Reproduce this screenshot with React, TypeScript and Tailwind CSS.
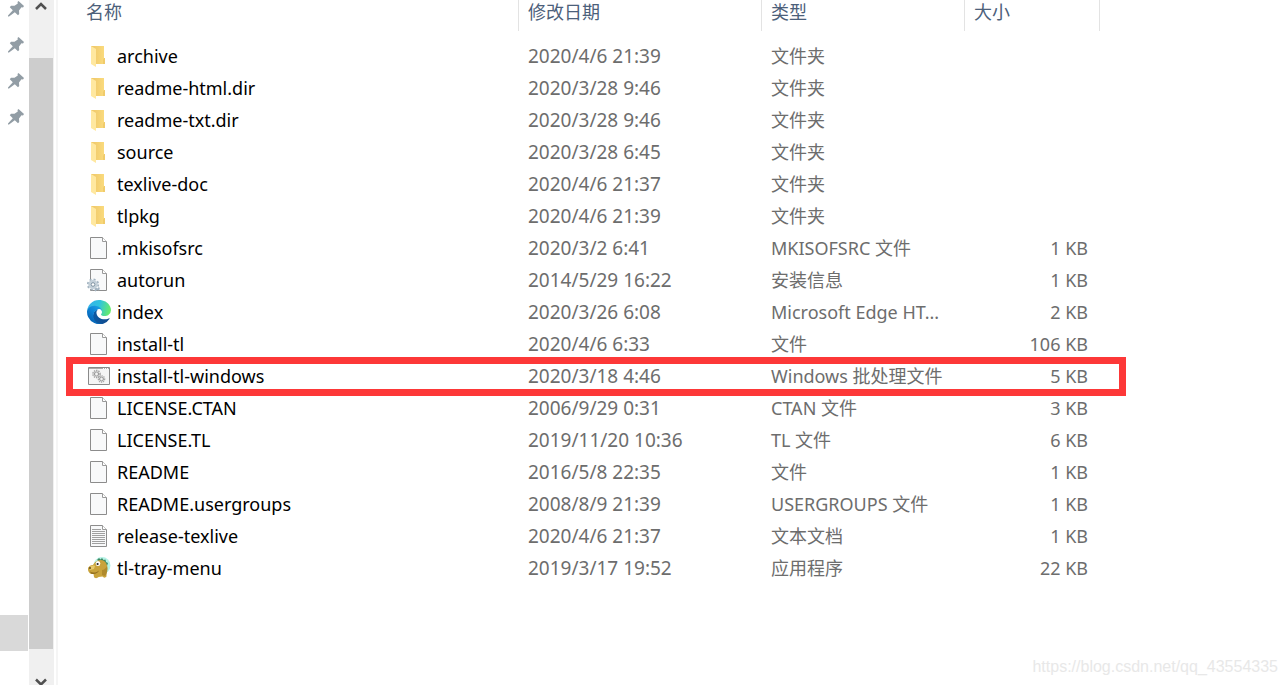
import React from 'react';

type IconKind = 'folder' | 'page' | 'setup' | 'edge' | 'batch' | 'text' | 'tray';

interface FileEntry {
  name: string;
  modified: string;
  type: string;
  size?: string;
  icon: IconKind;
  highlighted?: boolean;
}

const files: FileEntry[] = [
  { name: 'archive', modified: '2020/4/6 21:39', type: '文件夹', icon: 'folder' },
  { name: 'readme-html.dir', modified: '2020/3/28 9:46', type: '文件夹', icon: 'folder' },
  { name: 'readme-txt.dir', modified: '2020/3/28 9:46', type: '文件夹', icon: 'folder' },
  { name: 'source', modified: '2020/3/28 6:45', type: '文件夹', icon: 'folder' },
  { name: 'texlive-doc', modified: '2020/4/6 21:37', type: '文件夹', icon: 'folder' },
  { name: 'tlpkg', modified: '2020/4/6 21:39', type: '文件夹', icon: 'folder' },
  { name: '.mkisofsrc', modified: '2020/3/2 6:41', type: 'MKISOFSRC 文件', size: '1 KB', icon: 'page' },
  { name: 'autorun', modified: '2014/5/29 16:22', type: '安装信息', size: '1 KB', icon: 'setup' },
  { name: 'index', modified: '2020/3/26 6:08', type: 'Microsoft Edge HT...', size: '2 KB', icon: 'edge' },
  { name: 'install-tl', modified: '2020/4/6 6:33', type: '文件', size: '106 KB', icon: 'page' },
  { name: 'install-tl-windows', modified: '2020/3/18 4:46', type: 'Windows 批处理文件', size: '5 KB', icon: 'batch', highlighted: true },
  { name: 'LICENSE.CTAN', modified: '2006/9/29 0:31', type: 'CTAN 文件', size: '3 KB', icon: 'page' },
  { name: 'LICENSE.TL', modified: '2019/11/20 10:36', type: 'TL 文件', size: '6 KB', icon: 'page' },
  { name: 'README', modified: '2016/5/8 22:35', type: '文件', size: '1 KB', icon: 'page' },
  { name: 'README.usergroups', modified: '2008/8/9 21:39', type: 'USERGROUPS 文件', size: '1 KB', icon: 'page' },
  { name: 'release-texlive', modified: '2020/4/6 21:37', type: '文本文档', size: '1 KB', icon: 'text' },
  { name: 'tl-tray-menu', modified: '2019/3/17 19:52', type: '应用程序', size: '22 KB', icon: 'tray' },
];

const PageShape = () => (
  <>
    <path d="M3.5 1.5h12l4 4v17h-16z" fill="#f8f9fa" stroke="#8c8c8c" />
    <path d="M15.5 1.5v4h4" fill="#fff" stroke="#9a9a9a" />
  </>
);

const FileIcon: React.FC<{ kind: IconKind }> = ({ kind }) => {
  switch (kind) {
    case 'folder':
      return (
        <svg viewBox="0 0 24 24" className="w-6 h-6 shrink-0">
          <defs>
            <linearGradient id="folder-back" x1="0" x2="1">
              <stop offset="0" stopColor="#eec667" />
              <stop offset="1" stopColor="#fbdc7f" />
            </linearGradient>
          </defs>
          <path d="M4 2h13v12h1v6H4z" fill="url(#folder-back)" />
          <path d="M17 14h1v6h-2v-4z" fill="#f0cb6b" />
          <path d="M4 2l5 3v18l-5-3z" fill="#ffe8a0" />
        </svg>
      );
    case 'edge':
      return (
        <svg viewBox="0 0 256 256" className="w-6 h-6 shrink-0">
          <defs>
            <linearGradient id="edge-low" x1="63" y1="177" x2="241" y2="177" gradientUnits="userSpaceOnUse">
              <stop offset="0" stopColor="#0c59a4" />
              <stop offset="1" stopColor="#114a8b" />
            </linearGradient>
            <linearGradient id="edge-mid" x1="153" y1="100" x2="46" y2="216" gradientUnits="userSpaceOnUse">
              <stop offset="0" stopColor="#1b9de2" />
              <stop offset=".5" stopColor="#0e82d6" />
              <stop offset="1" stopColor="#0667b8" />
            </linearGradient>
            <linearGradient id="edge-top" x1="20" y1="60" x2="240" y2="120" gradientUnits="userSpaceOnUse">
              <stop offset="0" stopColor="#35b4e8" />
              <stop offset=".45" stopColor="#2fc3df" />
              <stop offset="1" stopColor="#66eb6e" />
            </linearGradient>
          </defs>
          <path
            d="M235.7 195.5a93.7 93.7 0 0 1-10.6 4.7 101.9 101.9 0 0 1-35.9 6.4c-47.3 0-88.5-32.5-88.5-74.3a31.5 31.5 0 0 1 16.4-27.3c-42.8 1.8-53.8 46.4-53.8 72.5 0 74 68.1 81.4 82.8 81.4 7.9 0 19.8-2.3 27-4.6l1.3-.4a128.3 128.3 0 0 0 66.6-52.8 4 4 0 0 0-5.3-5.6z"
            fill="url(#edge-low)"
          />
          <path
            d="M105.7 241.4a79.2 79.2 0 0 1-22.7-21.3 80.7 80.7 0 0 1 29.5-120c3.2-1.5 8.5-4.1 15.6-4a32.4 32.4 0 0 1 25.7 13 31.9 31.9 0 0 1 6.3 18.7c0-.2 24.5-79.6-80-79.6-43.9 0-80 41.6-80 78.2a130.2 130.2 0 0 0 12.1 56 128 128 0 0 0 156.4 67 75.5 75.5 0 0 1-62.8-8z"
            fill="url(#edge-mid)"
          />
          <path
            d="M152.3 148.9c-.9 1-3.4 2.5-3.4 5.7 0 2.6 1.7 5.1 4.7 7.2 14.4 10 41.5 8.7 41.6 8.7a59.6 59.6 0 0 0 30.3-8.3 61.4 61.4 0 0 0 30.4-52.9c.3-22.4-8-37.3-11.3-43.9C223.5 23.9 177.7 0 128 0A128 128 0 0 0 0 126.2c.5-36.5 36.8-66 80-66 3.5 0 23.5.3 42 10.1 16.3 8.6 24.9 18.9 30.8 29.2 6.2 10.7 7.3 24.1 7.3 29.5s-2.7 13.3-7.8 19.9z"
            fill="url(#edge-top)"
          />
        </svg>
      );
    case 'setup':
      return (
        <svg viewBox="0 0 24 24" className="w-6 h-6 shrink-0">
          <PageShape />
          <circle cx="6" cy="16.500" r="5.200" fill="#eef2f5" stroke="#a3b4c1" strokeWidth="1.800" strokeDasharray="2 2.080" />
          <circle cx="6" cy="16.500" r="3.200" fill="none" stroke="#c3cfd8" strokeWidth="2.800" />
          <circle cx="6" cy="16.500" r="1.800" fill="#fff" stroke="#7f93a2" />
          <path d="M8 23l1.500-2 2 .5.5-2" fill="none" stroke="#a3b4c1" strokeWidth="1.800" />
        </svg>
      );
    case 'batch':
      return (
        <svg viewBox="0 0 24 24" className="w-6 h-6 shrink-0">
          <path d="M1.5 3.5h21v17h-21z" fill="#f5f5f5" stroke="#8a8a8a" />
          <path d="M2 4.5h20" stroke="#aaa" />
          <path d="M16 4.500h1M18 4.500h1M20 4.500h1" stroke="#fff" />
          <circle cx="9.500" cy="10" r="3.600" fill="none" stroke="#a0a0a0" strokeWidth="1.400" strokeDasharray="1.400 .9" />
          <circle cx="9.500" cy="10" r="2.200" fill="#ddd" stroke="#999" />
          <circle cx="9.500" cy="10" r=".8" fill="#fff" />
          <circle cx="14.500" cy="15" r="3.200" fill="none" stroke="#a5a5a5" strokeWidth="1.200" strokeDasharray="1.300 .8" />
          <circle cx="14.500" cy="15" r="2" fill="#ddd" stroke="#9c9c9c" />
          <circle cx="14.500" cy="15" r=".8" fill="#fff" />
        </svg>
      );
    case 'text':
      return (
        <svg viewBox="0 0 24 24" className="w-6 h-6 shrink-0">
          <PageShape />
          <path
            d="M5 5.5h9M5 7.5h13M5 9.5h13M5 11.5h13M5 13.5h13M5 15.5h13M5 17.5h13M5 19.5h13"
            stroke="#a0a0a0"
          />
        </svg>
      );
    case 'tray':
      return (
        <svg viewBox="0 0 24 24" className="w-6 h-6 shrink-0">
          <circle cx="15" cy="9.500" r="8.500" fill="#b5f2e6" />
          <path d="M10 4l2-2 1.500 1.500L15 2l1.500 2 2-.5.5 2.500 2 1-1 3z" fill="#3f8a63" />
          <path
            d="M10 5c4-2 8-.5 9.500 3 1.500 3 1 6 0 8v4.500c-1 1.500-3 1.500-4 0l-4 .5c-1 1.500-4 1.500-4.500 0L6.500 18C3 18.500 1 16 1 13c0-2.500 3-4 5-4 1-2 2-3 4-4z"
            fill="#c9a33b"
          />
          <path d="M2 12c1-2 4-3 6-2l-1 3-4 1z" fill="#e6ca6c" />
          <path d="M3 15.500c3 2 7 1 9-1-1 3-5 4.500-8 3z" fill="#94701f" />
          <path d="M15 14c2 0 4-2 5-4 1 4 0 8-2 10l-3-1z" fill="#b08a2c" />
          <circle cx="3" cy="12" r="1" fill="#5e461a" />
          <ellipse cx="11" cy="7.500" rx="2.300" ry="2.500" fill="#fff" />
          <circle cx="10.600" cy="8" r="1.100" fill="#222" />
        </svg>
      );
    default:
      return (
        <svg viewBox="0 0 24 24" className="w-6 h-6 shrink-0">
          <PageShape />
        </svg>
      );
  }
};

const PinIcon = () => (
  <svg viewBox="0 0 16 16" className="w-4 h-4" fill="#929da5">
    <path d="M10.500 0L16 5l-1 1.500-1.500-.2-2.500 3.200.2 3.500-1.200 1.200-3.200-3L1 15.500H0V14.500l4.800-5.300-3-3L3 4.800h3.500L9.800 2.500 9.500 1z" />
  </svg>
);

const Sidebar = () => (
  <aside className="w-7 shrink-0 flex flex-col justify-between pb-[34px]">
    <ul className="-mt-[9px]">
      {[0, 1, 2, 3].map((pin) => (
        <li key={pin} className="h-9 flex items-center justify-end pr-1">
          <PinIcon />
        </li>
      ))}
    </ul>
    <div className="h-9 bg-[#d9d9d9]" />
  </aside>
);

const ScrollBar = () => (
  <div className="w-[25px] ml-px shrink-0 flex flex-col bg-[#f0f0f0]">
    <button type="button" aria-label="Scroll up" className="h-[58px] mr-px flex justify-center">
      <svg viewBox="0 0 12 12" className="w-3 h-3">
        <path d="M1 9l5-5 5 5" fill="none" stroke="#505050" strokeWidth="2.500" />
      </svg>
    </button>
    <div className="flex-1 mr-px bg-[#cdcdcd]" />
    <button type="button" aria-label="Scroll down" className="h-9 mr-px flex items-end justify-center overflow-hidden">
      <svg viewBox="0 0 12 8" className="w-3 h-2">
        <path d="M1 2.500l5 5 5-5" fill="none" stroke="#505050" strokeWidth="2.500" />
      </svg>
    </button>
  </div>
);

const columns = [
  { label: '名称', width: '' },
  { label: '修改日期', width: 'w-[243px]' },
  { label: '类型', width: 'w-[203px]' },
  { label: '大小', width: 'w-[135px]' },
];

const FileTable = () => (
  <table className="w-full table-fixed border-separate border-spacing-0 text-left whitespace-nowrap">
    <thead>
      <tr>
        {columns.map((column) => (
          <th key={column.label} className={`${column.width} p-0 border-r border-[#e3e3e3] font-normal`}>
            <button type="button" className="block w-full h-[31px] pl-[9px] pb-2 text-left text-lg leading-6 text-[#4c607a]">
              {column.label}
            </button>
          </th>
        ))}
      </tr>
    </thead>
    <tbody className="text-[#6d6d6d] before:block before:h-[9px]">
      {files.map((file) => (
        <tr key={file.name} className="relative h-8">
          <td className="p-0 pl-[10px] text-lg leading-8 text-black">
            <div className="flex items-center gap-1.5">
              <FileIcon kind={file.icon} />
              <span>{file.name}</span>
            </div>
            {file.highlighted && (
              <div className="absolute -left-[11px] -right-[26px] -top-[3px] -bottom-1 border-[7px] border-[#fd3838] pointer-events-none" />
            )}
          </td>
          <td className="p-0 pl-[9px] text-[19px] leading-8">{file.modified}</td>
          <td className="p-0 pl-[9px] text-lg leading-8">{file.type}</td>
          <td className="p-0 pr-3 text-right text-lg leading-8">{file.size}</td>
        </tr>
      ))}
    </tbody>
  </table>
);

const App: React.FC = () => (
  <div className="relative min-h-screen flex bg-white font-['Noto_Sans','Noto_Sans_CJK_SC',sans-serif]">
    <Sidebar />
    <ScrollBar />
    <main className="flex-1 min-w-0 ml-0.5 border-l-2 border-[#f5f5f5] pl-[19px] pr-[186px]">
      <FileTable />
    </main>
    <p className="absolute right-2 bottom-1.5 text-base leading-6 text-[#e8e8e8] font-['Liberation_Sans',sans-serif]">
      https://blog.csdn.net/qq_43554335
    </p>
  </div>
);

export default App;
